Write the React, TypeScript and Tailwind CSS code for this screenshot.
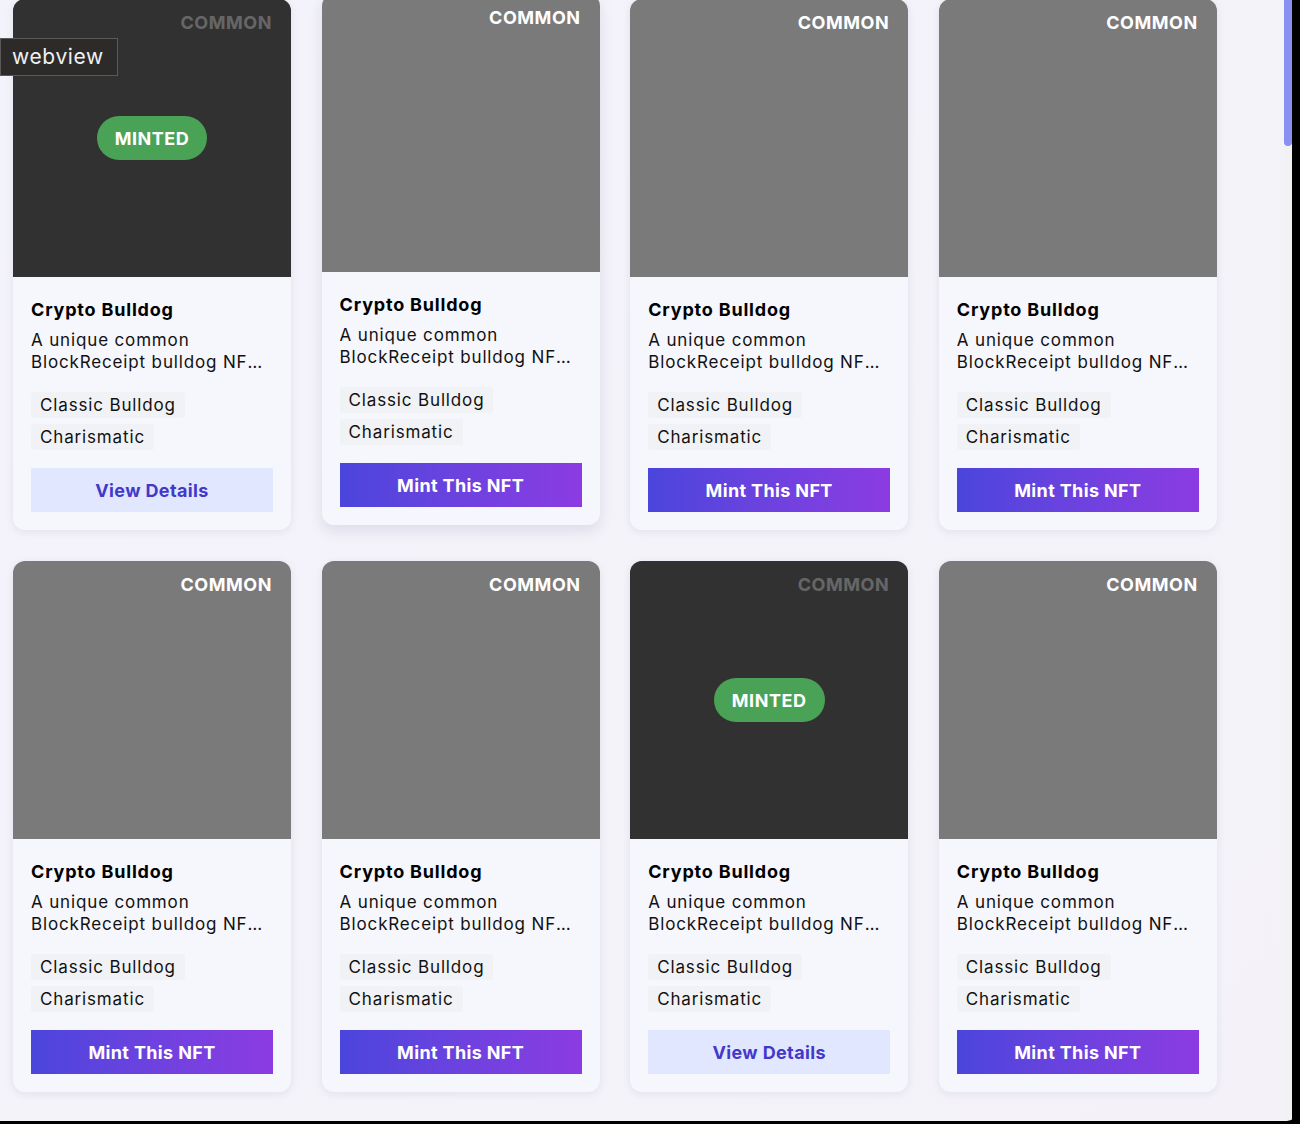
import { FC } from "react";

type Nft = {
  id: number;
  minted: boolean;
  lifted?: boolean;
};

const nfts: Nft[] = [
  { id: 1, minted: true },
  { id: 2, minted: false, lifted: true },
  { id: 3, minted: false },
  { id: 4, minted: false },
  { id: 5, minted: false },
  { id: 6, minted: false },
  { id: 7, minted: true },
  { id: 8, minted: false },
];

const NftCard: FC<{ nft: Nft }> = ({ nft }) => {
  return (
    <div
      className={
        "w-[278px] rounded-xl bg-[#f6f6fd] overflow-hidden shadow-[0_2px_8px_rgba(30,30,80,0.08)] " +
        (nft.lifted ? "-translate-y-[5px] shadow-[0_6px_14px_rgba(30,30,80,0.10)]" : "")
      }
    >
      {/* 画像エリア */}
      <div className="relative h-[278px] bg-[#7a7a7a]">
        <span className="absolute top-[10px] right-[19px] text-[18px] font-bold tracking-[0.03em] text-white">
          COMMON
        </span>
        {nft.minted && (
          <div className="absolute inset-0 flex items-center justify-center bg-black/60">
            <span className="flex h-[44px] items-center rounded-full bg-[#4aa256] px-[18px] text-[18px] font-bold tracking-[0.03em] text-white">
              MINTED
            </span>
          </div>
        )}
      </div>

      {/* 本文 */}
      <div className="px-[18px] pt-[20px] pb-[18px]">
        <h3 className="text-[18px] font-bold leading-[26px] tracking-[0.045em] text-black">
          Crypto Bulldog
        </h3>
        <p className="mt-[6px] line-clamp-2 text-[17px] leading-[22px] tracking-[0.05em] text-[#111]">
          A unique common BlockReceipt bulldog NFT with a charismatic attitude.
        </p>
        <div className="mt-[19px] flex flex-wrap gap-[6px]">
          <span className="h-[26px] rounded-[3px] bg-[#f1f2f5] px-[9px] text-[17px] leading-[26px] tracking-[0.05em] text-[#111]">
            Classic Bulldog
          </span>
          <span className="h-[26px] rounded-[3px] bg-[#f1f2f5] px-[9px] text-[17px] leading-[26px] tracking-[0.05em] text-[#111]">
            Charismatic
          </span>
        </div>
        {nft.minted ? (
          <button className="mt-[18px] h-[44px] w-full bg-[#e0e7ff] text-[18px] font-bold tracking-[0.02em] text-[#4338ca]">
            View Details
          </button>
        ) : (
          <button className="mt-[18px] h-[44px] w-full bg-gradient-to-r from-[#4a45dc] to-[#8b3be2] text-[18px] font-bold tracking-[0.02em] text-white">
            Mint This NFT
          </button>
        )}
      </div>
    </div>
  );
};

const App: FC = () => {
  return (
    <div
      className="relative h-[1124px] w-[1300px] overflow-hidden bg-black"
      style={{ fontFamily: "Inter, 'Noto Sans', sans-serif" }}
    >
      <div className="flex h-[1121px] w-[1297px] overflow-hidden rounded-br-[10px]">
        <div className="h-full w-[1284px] bg-gradient-to-br from-[#f3f3fb] to-[#f4f2f8]">
          <div className="-mt-[1px] grid grid-cols-[repeat(4,278px)] gap-x-[30.6px] gap-y-[31px] pl-[13px]">
            {nfts.map((nft) => (
              <NftCard key={nft.id} nft={nft} />
            ))}
          </div>
        </div>
        {/* スクロールバー */}
        <div className="h-full w-[8px] bg-[#f2f2f4]">
          <div className="h-[146px] w-full rounded-b-full bg-[#8a8ff2]" />
        </div>
      </div>

      {/* ツールチップ */}
      <div className="absolute left-0 top-[38px] flex h-[38px] items-center border border-[#5a5a5a] bg-[#2c2b2a] pl-[11px] pr-[13px] text-[21px] tracking-[0.03em] text-[#f0f0f0]">
        webview
      </div>
    </div>
  );
};

export default App;
